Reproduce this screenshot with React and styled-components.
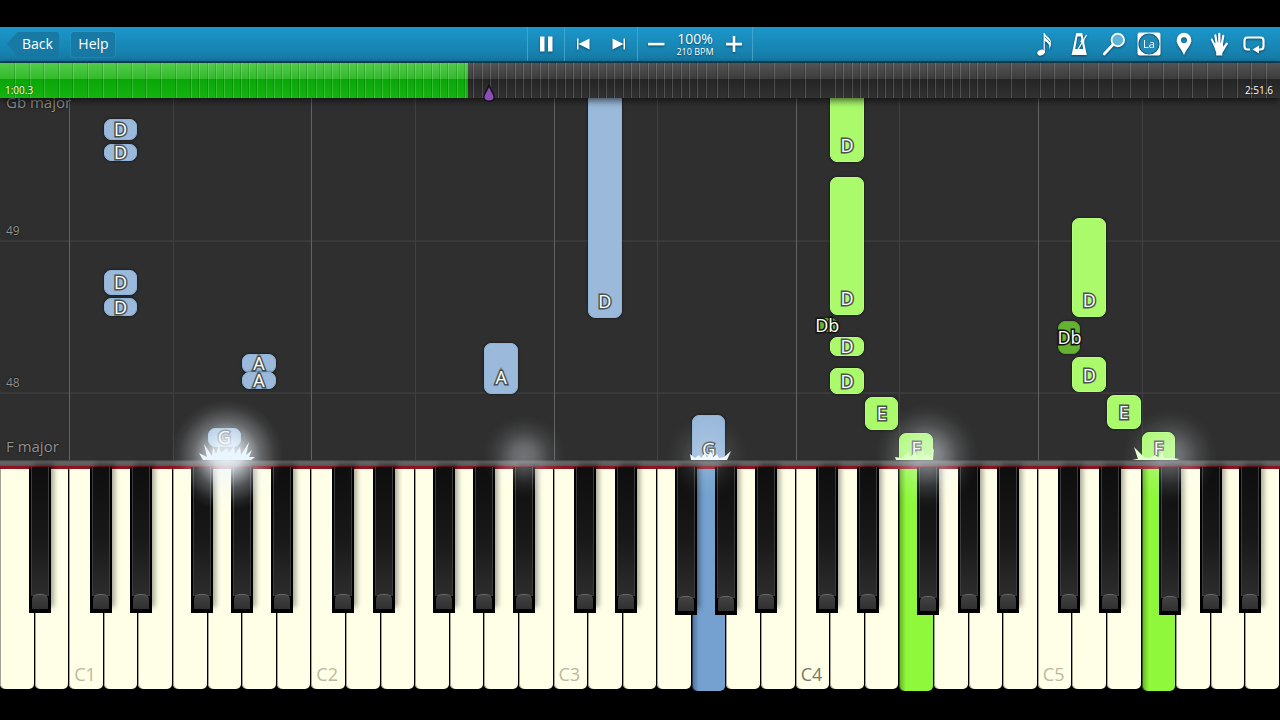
import React from 'react';
import styled, { createGlobalStyle } from 'styled-components';

const GlobalStyle = createGlobalStyle`
  * {
    box-sizing: border-box;
  }

  body {
    margin: 0;
    background: #000;
    font-family: "Open Sans", "Noto Sans", sans-serif;
  }

  button {
    font: inherit;
    color: inherit;
    border: 0;
    padding: 0;
    background: none;
    cursor: pointer;
  }
`;

const KEY_COUNT = 37;

const Player = styled.main`
  display: flex;
  flex-direction: column;
  min-height: 100vh;
  padding: 27px 0 31px;
  overflow: hidden;
`;

/* ---------- toolbar ---------- */

const Toolbar = styled.header`
  display: grid;
  grid-template-columns: 1fr auto 1fr;
  height: 36px;
  color: #fff;
  background: linear-gradient(#1b97cb, #167ba6);
  border-bottom: 2px solid #0d4a63;
  text-shadow: 0 1px 2px rgba(0, 30, 50, 0.6);
`;

const NavGroup = styled.nav`
  display: flex;
  align-items: center;
  gap: 12px;
  padding-left: 7px;
`;

const BackButton = styled.button`
  height: 25px;
  width: 52px;
  padding-left: 9px;
  font-size: 14px;
  line-height: 24px;
  background: #1779a4;
  clip-path: polygon(0 50%, 11px 0, 100% 0, 100% 100%, 11px 100%);
  border-radius: 3px;
`;

const HelpButton = styled.button`
  height: 25px;
  width: 44px;
  padding-left: 1px;
  font-size: 14px;
  line-height: 24px;
  background: #1779a4;
  border-radius: 3px;
  box-shadow: 0 0 0 1px rgba(60, 160, 205, 0.3);
`;

const Transport = styled.div`
  display: flex;
`;

const Segment = styled.div`
  display: flex;
  align-items: center;
  justify-content: center;
  border-left: 1px solid #3fa3cb;

  &:last-child {
    border-right: 1px solid #3fa3cb;
  }
`;

const IconButton = styled.button`
  display: flex;
  align-items: center;
  justify-content: center;
  width: ${props => props.$width || 36}px;
  height: 34px;

  svg {
    filter: drop-shadow(0 1px 1px rgba(0, 30, 50, 0.6));
  }
`;

const Tempo = styled.div`
  width: 42px;
  text-align: center;
`;

const TempoPercent = styled.div`
  font-size: 14px;
  line-height: 16px;
`;

const TempoBpm = styled.div`
  font-size: 9px;
  line-height: 10px;
  white-space: nowrap;
`;

const ToolGroup = styled.div`
  display: flex;
  align-items: center;
  justify-content: flex-end;
  padding-right: 9px;
`;

/* ---------- timeline ---------- */

const Timeline = styled.div`
  position: relative;
  z-index: 3;
  height: 35px;
  background: linear-gradient(#545454, #3c3c3c 45%, #242424 46%, #323232);
  box-shadow: 0 2px 8px rgba(0, 0, 0, 0.7);
`;

const Played = styled.div`
  height: 100%;
  background: linear-gradient(#52cb4a, #32ba2b 45%, #0aa608 46%, #14b411);
`;

const Tick = styled.span`
  position: absolute;
  top: 0;
  bottom: 0;
  width: 2px;
  background: linear-gradient(90deg, rgba(0, 0, 0, 0.14) 50%, rgba(255, 255, 255, 0.17) 50%);
`;

const Clock = styled.span`
  position: absolute;
  bottom: 2px;
  ${props => (props.$end ? 'right: 7px;' : 'left: 5px;')}
  font-size: 10px;
  line-height: 12px;
  color: #fff;
  text-shadow: 0 0 2px rgba(0, 0, 0, 0.7);
`;

const Marker = styled.svg`
  position: absolute;
  bottom: -4px;
  left: 38.2%;
  transform: translateX(-50%);
`;

/* ---------- falling notes ---------- */

const Roll = styled.section`
  position: relative;
  flex: 1;
  min-height: 362px;
  overflow: hidden;
  background: #2f2f2f;
`;

const Lanes = styled.div`
  position: absolute;
  inset: 0;
  display: grid;
  grid-template-columns: repeat(${KEY_COUNT}, 1fr);
`;

const Lane = styled.div`
  border-left: 1px solid ${props => {
    switch (props.$line) {
      case 'C': return '#636363';
      case 'F': return '#414141';
      default: return 'transparent';
    }
  }};
`;

const BarLine = styled.div`
  position: absolute;
  left: 0;
  right: 0;
  height: 2px;
  background: #3a3a3a;
`;

const RollLabel = styled.span`
  position: absolute;
  left: 6px;
  font-size: 15px;
  line-height: 20px;
  color: #929292;
  text-shadow: 0 0 2px #000;
`;

const BarNumber = styled(RollLabel)`
  font-size: 12px;
`;

const NoteBlock = styled.div`
  position: absolute;
  display: flex;
  align-items: flex-end;
  justify-content: center;
  border-radius: 7px;
  border: 1px solid ${props => (props.$hand === 'left' ? '#8fb4da' : '#b4ff7c')};
  background: ${props => {
    if (props.$sharp) return '#65b233';
    return props.$hand === 'left' ? '#9ab9db' : '#abfa6c';
  }};
  ${props => props.$sharp && 'border-color: #58a52b;'}
  box-shadow: 0 0 2px 1px rgba(0, 0, 0, 0.3);
`;

const NoteName = styled.span`
  font-size: 18px;
  color: #fff;
  -webkit-text-stroke: 3px ${props => (props.$sharp ? '#111' : '#4a5250')};
  paint-order: stroke fill;
`;

/* ---------- strike rail ---------- */

const Rail = styled.div`
  position: relative;
  height: 9px;
  background: linear-gradient(#3c3c3c, #686868 2px, #555 6px, #8c1420 6px, #8c1420);
`;

const Glow = styled.div`
  position: absolute;
  z-index: 2;
  top: 0;
  width: ${props => props.$size}px;
  height: ${props => props.$size}px;
  transform: translate(-50%, -54%);
  border-radius: 50%;
  pointer-events: none;
  background: radial-gradient(
    closest-side,
    rgba(240, 248, 255, ${props => props.$power}),
    rgba(240, 248, 255, ${props => props.$power * 0.85}) 25%,
    rgba(240, 248, 255, ${props => props.$power * 0.3}) 60%,
    rgba(240, 248, 255, ${props => props.$power * 0.07}) 85%,
    rgba(240, 248, 255, 0)
  );
`;

const Spark = styled.svg`
  position: absolute;
  z-index: 2;
  bottom: 100%;
  transform: translateX(-50%);
  pointer-events: none;
`;

/* ---------- keyboard ---------- */

const Keyboard = styled.section`
  display: grid;
  grid-template-columns: repeat(${KEY_COUNT}, 1fr);
  height: 220px;
  background: #000;
`;

const KeySlot = styled.div`
  position: relative;
`;

const WhiteKey = styled.button`
  display: flex;
  align-items: flex-end;
  width: calc(100% - 1px);
  height: ${props => (props.$pressed ? 222 : 220)}px;
  padding: 0 0 4px 5px;
  border-radius: 0 0 5px 5px;
  background: ${props => {
    switch (props.$pressed) {
      case 'left': return 'linear-gradient(90deg, #4a6f96, #74a1cf 7px)';
      case 'right': return 'linear-gradient(90deg, #5fae25, #8ff83a 7px)';
      default: return '#ffffe7';
    }
  }};
  box-shadow: inset 1px 0 0 ${props => (props.$pressed ? 'rgba(0, 0, 0, 0.5)' : '#a3a391')};
`;

const KeyName = styled.span`
  font-size: 18px;
  line-height: 22px;
  color: ${props => (props.$middle ? '#77776a' : '#b9b9a4')};
`;

const BlackKey = styled.button`
  position: absolute;
  z-index: 1;
  top: -2px;
  left: calc(100% - 11px + ${props => props.$shift}px);
  width: 22px;
  height: ${props => (props.$pressed ? 148 : 146)}px;
  background: #000;
  box-shadow: 4px -5px 5px -1px rgba(0, 0, 0, 0.35);

  &::before {
    content: '';
    position: absolute;
    inset: 0 2px 17px 2px;
    border: 1px solid #3c3c3c;
    border-top: 0;
    background: linear-gradient(#0e0e0e, #181818 55%, #2c2c2c);
  }

  &::after {
    content: '';
    position: absolute;
    left: 3px;
    right: 3px;
    bottom: 4px;
    height: 14px;
    border-radius: 6px 6px 0 0;
    border-top: 1px solid #686868;
    background: linear-gradient(#424242, #303030);
  }
`;

const LETTERS = ['C', 'D', 'E', 'F', 'G', 'A', 'B'];

// black keys sit slightly off the gap between their white neighbours
const SHARP_SHIFT = { C: -3, D: 3, F: -6, G: 0, A: 5 };

const keys = Array.from({ length: KEY_COUNT }, (_, i) => {
  const letter = LETTERS[(i + 5) % 7];
  return {
    letter,
    octave: Math.floor((i + 5) / 7),
    shift: i < KEY_COUNT - 1 ? SHARP_SHIFT[letter] : undefined,
  };
});

const pressed = { 20: 'left', 26: 'right', 33: 'right' };

// from = distance of the note's lower edge from the rail
const notes = [
  { key: 3, hand: 'left', name: 'D', from: 320, length: 21 },
  { key: 3, hand: 'left', name: 'D', from: 299, length: 17 },
  { key: 3, hand: 'left', name: 'D', from: 165, length: 25 },
  { key: 3, hand: 'left', name: 'D', from: 144, length: 18 },
  { key: 7, hand: 'left', name: 'A', from: 87, length: 19 },
  { key: 7, hand: 'left', name: 'A', from: 71, length: 17 },
  { key: 6, hand: 'left', name: 'G', from: 13, length: 19 },
  { key: 14, hand: 'left', name: 'A', from: 66, length: 51 },
  { key: 17, hand: 'left', name: 'D', from: 142, length: 240 },
  { key: 20, hand: 'left', name: 'G', from: -6, length: 51 },
  { key: 24, hand: 'right', name: 'D', from: 298, length: 90 },
  { key: 24, hand: 'right', name: 'D', from: 145, length: 138 },
  { key: 23, hand: 'right', name: 'Db', from: 128, length: 14, sharp: true },
  { key: 24, hand: 'right', name: 'D', from: 104, length: 19 },
  { key: 24, hand: 'right', name: 'D', from: 66, length: 26 },
  { key: 25, hand: 'right', name: 'E', from: 30, length: 33 },
  { key: 26, hand: 'right', name: 'F', from: -4, length: 31 },
  { key: 31, hand: 'right', name: 'D', from: 143, length: 99 },
  { key: 30, hand: 'right', name: 'Db', from: 106, length: 33, sharp: true },
  { key: 31, hand: 'right', name: 'D', from: 68, length: 35 },
  { key: 32, hand: 'right', name: 'E', from: 31, length: 34 },
  { key: 33, hand: 'right', name: 'F', from: -4, length: 32 },
];

// bar ticks on the timeline, in runs of equal tempo: [start, step, count]
const tickRuns = [
  [14, 14.6, 12],
  [190, 8.3, 63],
  [716, 11, 2],
  [743, 15.2, 6],
  [834, 8.35, 19],
  [995, 14.5, 9],
  [1129, 18, 2],
  [1162, 14.7, 8],
];

const ticks = tickRuns.flatMap(([start, step, count]) =>
  Array.from({ length: count }, (_, i) => ((start + i * step) / 1280) * 100)
);

const glows = [
  { at: 17.7, size: 112, power: 0.95 },
  { at: 40.9, size: 84, power: 0.34 },
  { at: 55.2, size: 84, power: 0.2 },
  { at: 72.4, size: 104, power: 0.5 },
  { at: 91.4, size: 96, power: 0.36 },
];

const sparks = [
  {
    at: 17.7,
    color: '#e9f5ff',
    d: 'M4 20 L0 13 L8 17 L5 4 L13 16 L14 7 L17 14 L20 5 L22 13 L28 8 L30 13 L35 6 L36 14 L41 7 L42 15 L50 2 L47 15 L53 10 L50 17 L56 17 L52 20 Z',
  },
  {
    at: 55.4,
    color: '#f2f9ff',
    d: 'M10 20 L9 14 L14 18 L18 15 L20 18 L24 13 L26 17 L30 11 L32 17 L36 14 L38 18 L43 17 L50 11 L46 20 Z',
  },
  {
    at: 71.6,
    color: '#dcffc4',
    d: 'M8 20 L7 17 L14 18 L20 12 L23 17 L27 11 L30 16 L35 10 L37 16 L40 13 L42 17 L46 8 L45 20 Z',
  },
  {
    at: 90.5,
    color: '#e4ffd0',
    d: 'M7 20 L2 19 L8 19 L4 7 L14 17 L20 18 L25 15 L29 18 L32 11 L34 18 L42 18 L50 19 L46 20 Z',
  },
];

const left = index => `${(index / KEY_COUNT) * 100}%`;

function Note({ note }) {
  const place = note.sharp
    ? { left: `calc(${left(note.key + 1)} - 14px)`, width: 22 }
    : { left: left(note.key), width: `calc(${left(1)} - 1px)` };

  return (
    <NoteBlock
      $hand={note.hand}
      $sharp={note.sharp}
      style={{ ...place, bottom: note.from, height: note.length }}
    >
      <NoteName $sharp={note.sharp} style={{ lineHeight: `${Math.min(note.length - 2, 31)}px` }}>
        {note.name}
      </NoteName>
    </NoteBlock>
  );
}

const Icon = ({ children, size = 24 }) => (
  <svg width={size} height={size} viewBox="0 0 24 24" fill="#fff" aria-hidden="true">
    {children}
  </svg>
);

const tools = [
  {
    label: 'Sheet music',
    icon: (
      <Icon>
        <ellipse cx="9" cy="20.600" rx="3.800" ry="2.800" transform="rotate(-20 9 20.600)" />
        <path d="M11.600 1h1.200c.4 3.200 6 4.600 6.200 9.200.1 2.600-.5 4.800-2 7 .9-3.200.5-5.600-4.200-8.200V21h-1.200z" />
        <path d="M13 4.800c.8 2.200 3.800 2.900 5 5.600" fill="none" stroke="#1b85b3" strokeWidth="1" />
      </Icon>
    ),
  },
  {
    label: 'Metronome',
    icon: (
      <Icon>
        <path fillRule="evenodd" d="M9.200 1h6l4.600 22H4.600zM10.400 4.500 8.200 17h8L13.900 4.500z" />
        <path d="M11 17.500 19.500 3" stroke="#fff" strokeWidth="1.300" />
        <path d="m14.800 7 3 1.800-1.700 2.600-2.900-1.700z" />
      </Icon>
    ),
  },
  {
    label: 'Zoom',
    icon: (
      <Icon>
        <circle cx="15.800" cy="8" r="6.300" fill="#5fb4d8" stroke="#fff" strokeWidth="1.800" />
        <path d="m10.600 13-8.400 9" stroke="#fff" strokeWidth="2.800" strokeLinecap="round" />
      </Icon>
    ),
  },
  {
    label: 'Note names',
    icon: (
      <Icon>
        <rect x=".5" y=".5" width="23" height="23" rx="2" />
        <circle cx="12" cy="12" r="10" fill="#2187b4" stroke="#0f6085" strokeWidth="1.200" />
        <text x="12" y="16" textAnchor="middle" fontSize="11">La</text>
      </Icon>
    ),
  },
  {
    label: 'Bookmarks',
    icon: (
      <Icon>
        <path fillRule="evenodd" d="M12 .8a7.400 7.400 0 0 1 7.400 7.400c0 5-5.600 9.300-7.400 15-1.800-5.700-7.400-10-7.400-15A7.400 7.400 0 0 1 12 .8zm0 4.400a3 3 0 1 0 0 6 3 3 0 0 0 0-6z" />
      </Icon>
    ),
  },
  {
    label: 'Hands',
    icon: (
      <Icon>
        <g stroke="#fff" strokeLinecap="round" fill="none">
          <path d="m8 14-3.200-6.500" strokeWidth="2" />
          <path d="M9.800 12 8.300 3.300" strokeWidth="2.200" />
          <path d="M12.300 12V1.900" strokeWidth="2.300" />
          <path d="m14.800 12 1.500-8.200" strokeWidth="2.200" />
          <path d="m15.500 18 4.300-6.300" strokeWidth="2.300" />
        </g>
        <path d="M7 11.500c3-1.500 6-1.500 8.900 0l.4 3.500 1.500-1 .5 2-3 5v2.400H9.200V20.500L7.500 16z" />
      </Icon>
    ),
  },
  {
    label: 'Loop',
    icon: (
      <Icon>
        <path d="M8 17.500H5.500a3 3 0 0 1-3-3v-6a3 3 0 0 1 3-3h13a3 3 0 0 1 3 3v6a3 3 0 0 1-3 3H15" fill="none" stroke="#fff" strokeWidth="2.200" />
        <path d="m10.500 17.500 6.500-4v8z" />
      </Icon>
    ),
  },
];

function Header() {
  return (
    <Toolbar>
      <NavGroup>
        <BackButton type="button">Back</BackButton>
        <HelpButton type="button">Help</HelpButton>
      </NavGroup>

      <Transport>
        <Segment>
          <IconButton type="button" aria-label="Pause">
            <Icon><path d="M6 4.500h4.500v15H6zM14 4.500h4.500v15H14z" /></Icon>
          </IconButton>
        </Segment>
        <Segment>
          <IconButton type="button" aria-label="Previous bar">
            <Icon><path d="M6 6.500h1.500v11H6zM18.500 6.500v11L7.500 12z" /></Icon>
          </IconButton>
          <IconButton type="button" aria-label="Next bar">
            <Icon><path d="M16.500 6.500H18v11h-1.500zM5.500 6.500v11l11-5.500z" /></Icon>
          </IconButton>
        </Segment>
        <Segment>
          <IconButton type="button" aria-label="Slower">
            <Icon><path d="M4 10.800h16.500v2.600H4z" /></Icon>
          </IconButton>
          <Tempo>
            <TempoPercent>100%</TempoPercent>
            <TempoBpm>210 BPM</TempoBpm>
          </Tempo>
          <IconButton type="button" aria-label="Faster">
            <Icon><path d="M10.700 4h2.600v6.800H20v2.600h-6.700V20h-2.600v-6.600H4v-2.600h6.700z" /></Icon>
          </IconButton>
        </Segment>
      </Transport>

      <ToolGroup>
        {tools.map(tool => (
          <IconButton key={tool.label} type="button" $width={35} aria-label={tool.label}>
            {tool.icon}
          </IconButton>
        ))}
      </ToolGroup>
    </Toolbar>
  );
}

function App() {
  const progress = 36.6;

  return (
    <Player>
      <GlobalStyle />
      <Header />

      <Timeline role="progressbar" aria-label="Song position" aria-valuenow={progress}>
        <Played style={{ width: `${progress}%` }} />
        {ticks.map(tick => (
          <Tick key={tick} style={{ left: `${tick}%` }} />
        ))}
        <Clock>1:00.3</Clock>
        <Clock $end>2:51.6</Clock>
        <Marker width="12" height="18" viewBox="0 0 12 18">
          <path d="M6 1C7 5.500 11.200 9.500 11.200 13c0 2.600-2 4.200-5.200 4.200S.8 15.600.8 13C.8 9.500 5 5.500 6 1z" fill="#8a4fb5" stroke="#160d1d" strokeWidth="1.400" />
        </Marker>
      </Timeline>

      <Roll>
        <BarLine style={{ bottom: 218 }} />
        <BarLine style={{ bottom: 66 }} />
        <Lanes>
          {keys.map((key, i) => (
            <Lane key={i} $line={key.letter} />
          ))}
        </Lanes>
        <RollLabel style={{ bottom: 348 }}>Gb major</RollLabel>
        <BarNumber style={{ bottom: 219 }}>49</BarNumber>
        <BarNumber style={{ bottom: 67 }}>48</BarNumber>
        <RollLabel style={{ bottom: 4 }}>F major</RollLabel>
        {notes.map(note => (
          <Note key={`${note.key}-${note.from}`} note={note} />
        ))}
      </Roll>

      <Rail>
        {glows.map(glow => (
          <Glow key={glow.at} $size={glow.size} $power={glow.power} style={{ left: `${glow.at}%` }} />
        ))}
        {sparks.map(spark => (
          <Spark key={spark.at} width="56" height="20" viewBox="0 0 56 20" style={{ left: `${spark.at}%` }}>
            <path d={spark.d} fill={spark.color} />
          </Spark>
        ))}
      </Rail>

      <Keyboard>
        {keys.map((key, i) => (
          <KeySlot key={i}>
            <WhiteKey type="button" $pressed={pressed[i]} aria-label={`${key.letter}${key.octave}`}>
              {key.letter === 'C' && (
                <KeyName $middle={key.octave === 4}>C{key.octave}</KeyName>
              )}
            </WhiteKey>
            {key.shift !== undefined && (
              <BlackKey
                type="button"
                $shift={key.shift}
                $pressed={pressed[i] || pressed[i + 1]}
                aria-label={`${key.letter}#${key.octave}`}
              />
            )}
          </KeySlot>
        ))}
      </Keyboard>
    </Player>
  );
}

export default App;
